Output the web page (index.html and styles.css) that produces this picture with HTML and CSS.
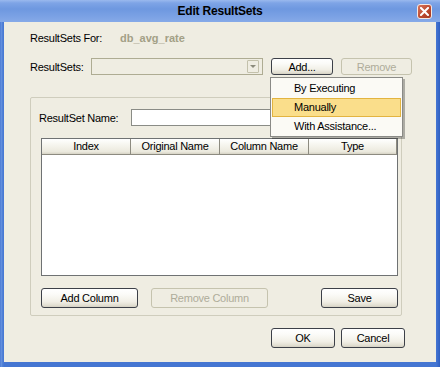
FILE: index.html
```html
<!DOCTYPE html>
<html>
<head>
<meta charset="utf-8">
<link rel="stylesheet" href="styles.css">
</head>
<body>
<div class="window">
  <div class="titlebar">
    <span class="tb-spacer"></span>
    <span class="title">Edit ResultSets</span>
    <span class="tb-right">
      <span class="close">
        <svg width="9" height="9" viewBox="0 0 9 9"><path d="M1 1 L8 8 M8 1 L1 8" stroke="#fff" stroke-width="2" stroke-linecap="square"/></svg>
      </span>
    </span>
  </div>
  <div class="client">
    <div class="row row-for">
      <span class="lbl lbl-for">ResultSets For:</span>
      <span class="dbname">db_avg_rate</span>
    </div>
    <div class="row row-sets">
      <span class="lbl lbl-sets">ResultSets:</span>
      <div class="combo"><span class="combo-arrow"><span class="tri"></span></span></div>
      <div class="add-wrap">
        <button class="btn btn-add">Add...</button>
        <div class="menu">
          <div class="menu-item">By Executing</div>
          <div class="menu-item active">Manually</div>
          <div class="menu-item">With Assistance...</div>
        </div>
      </div>
      <button class="btn btn-remove disabled">Remove</button>
    </div>
    <div class="panel">
      <div class="name-row">
        <span class="lbl lbl-name">ResultSet Name:</span>
        <div class="field"></div>
      </div>
      <div class="table">
        <div class="thead">
          <div class="th">Index</div>
          <div class="th">Original Name</div>
          <div class="th">Column Name</div>
          <div class="th">Type</div>
        </div>
        <div class="tbody"></div>
      </div>
      <div class="panel-buttons">
        <button class="btn btn-addcol">Add Column</button>
        <button class="btn btn-remcol disabled">Remove Column</button>
        <button class="btn btn-save">Save</button>
      </div>
    </div>
    <div class="dialog-buttons">
      <button class="btn btn-ok">OK</button>
      <button class="btn btn-cancel">Cancel</button>
    </div>
  </div>
</div>
</body>
</html>
```

FILE: styles.css
```css
* { box-sizing: border-box; }
html, body { margin: 0; padding: 0; }
body {
  width: 440px;
  height: 367px;
  overflow: hidden;
  font-family: "Liberation Sans", Arial, sans-serif;
  font-size: 11px;
  letter-spacing: -0.25px;
  color: #000;
}
.window {
  width: 440px;
  height: 367px;
  display: flex;
  flex-direction: column;
  background: linear-gradient(90deg, #3a6bcc 0, #6f99e2 1px, #5585d9 2px, #4576d2 4px, #4576d2 436px, #3a6bcc 438px, #2f5fbf 440px);
}
.titlebar {
  height: 22px;
  flex: none;
  display: grid;
  grid-template-columns: 1fr auto 1fr;
  align-items: center;
  background: linear-gradient(#9ab9ee 0, #7ea4e6 3px, #6e98e0 9px, #7aa1e4 16px, #86aae8 22px);
}
.title {
  font-weight: bold;
  font-size: 12px;
  letter-spacing: -0.2px;
  color: #000;
  line-height: 22px;
}
.tb-right {
  display: flex;
  justify-content: flex-end;
  padding-right: 8px;
}
.close {
  width: 15px;
  height: 15px;
  border: 1px solid #f4e8e4;
  border-radius: 3px;
  background: linear-gradient(135deg, #d9735a, #b9472d 60%, #a53a22);
  display: flex;
  align-items: center;
  justify-content: center;
}
.client {
  flex: 1;
  margin: 0 4px 5px 4px;
  background: #efede2;
  padding: 9px 31px 0 26px;
  display: flex;
  flex-direction: column;
}
.row { display: flex; align-items: center; }
.row > * { flex: none; }
.row-for { height: 14px; }
.lbl { white-space: nowrap; }
.lbl-for { width: 90px; }
.dbname { font-weight: bold; color: #a3a086; letter-spacing: 0; }
.row-sets { margin-top: 13px; height: 17px; }
.lbl-sets { width: 61px; }
.combo {
  width: 172px;
  height: 17px;
  border: 1px solid #aeac93;
  display: flex;
  justify-content: flex-end;
  align-items: center;
  padding-right: 3px;
}
.combo-arrow {
  width: 12px;
  height: 13px;
  border: 1px solid #c3c1ab;
  border-radius: 1px;
  display: flex;
  align-items: center;
  justify-content: center;
}
.tri {
  width: 0; height: 0;
  border-left: 3px solid transparent;
  border-right: 3px solid transparent;
  border-top: 3px solid #8c8b7c;
}
.add-wrap { position: relative; margin-left: 8px; }
.btn {
  font-family: "Liberation Sans", Arial, sans-serif;
  font-size: 11px;
  letter-spacing: -0.25px;
  color: #000;
  height: 20px;
  border: 1px solid #3c4048;
  border-radius: 3px;
  background: linear-gradient(#ffffff 0, #fbfbf8 30%, #f1efe6 70%, #e2dfd2 90%, #d4d0c2 100%);
  padding: 0;
  margin: 0;
  display: flex;
  align-items: center;
  justify-content: center;
  flex: none;
}
.btn.disabled {
  border-color: #c5c3ae;
  color: #aeac9a;
  background: #efede2;
}
.btn-add { width: 62px; height: 17px; }
.btn-remove { width: 71px; height: 17px; margin-left: 8px; }
.menu {
  position: absolute;
  left: -1px;
  top: 19px;
  width: 133px;
  height: 60px;
  background: #fbfaf5;
  border: 1px solid #8a8a86;
  box-shadow: 2px 2px 0 rgba(0,0,0,0.28);
  padding: 1px;
  z-index: 5;
}
.menu-item {
  height: 19px;
  line-height: 17px;
  padding-left: 21px;
  border: 1px solid transparent;
  white-space: nowrap;
}
.menu-item.active {
  background: #fade8b;
  border-color: #e3b440;
}
.panel {
  margin-top: 22px;
  width: 372px;
  height: 219px;
  border: 1px solid #cfcdbd;
  border-radius: 2px;
  padding: 11px 3px 0 8px;
  display: flex;
  flex-direction: column;
}
.name-row { display: flex; align-items: center; height: 17px; }
.lbl-name { width: 92px; flex: none; }
.field {
  flex: 1;
  margin-right: 1px;
  height: 17px;
  background: #fff;
  border: 1px solid #8a8c86;
}
.table {
  margin-top: 12px;
  margin-left: 2px;
  width: 357px;
  height: 138px;
  border: 1px solid #6f7273;
  background: #fff;
  display: flex;
  flex-direction: column;
}
.thead {
  display: grid;
  grid-template-columns: 89px 89px 89px 1fr;
  height: 16px;
}
.th {
  text-align: center;
  line-height: 15px;
  border-right: 1px solid #8d8b80;
  border-bottom: 1px solid #8d8b80;
  background: linear-gradient(#ffffff 0, #f6f5ee 40%, #ebe9dd 85%, #d6d3c5 100%);
  white-space: nowrap;
  overflow: hidden;
}
.tbody { flex: 1; }
.panel-buttons {
  margin-top: 12px;
  margin-left: 2px;
  display: flex;
  width: 357px;
}
.btn-addcol { width: 97px; }
.btn-remcol { width: 117px; margin-left: 13px; }
.btn-save { width: 77px; margin-left: auto; }
.dialog-buttons {
  margin-top: 12px;
  display: flex;
  justify-content: flex-end;
  gap: 6px;
}
.btn-ok, .btn-cancel { width: 64px; }
```
